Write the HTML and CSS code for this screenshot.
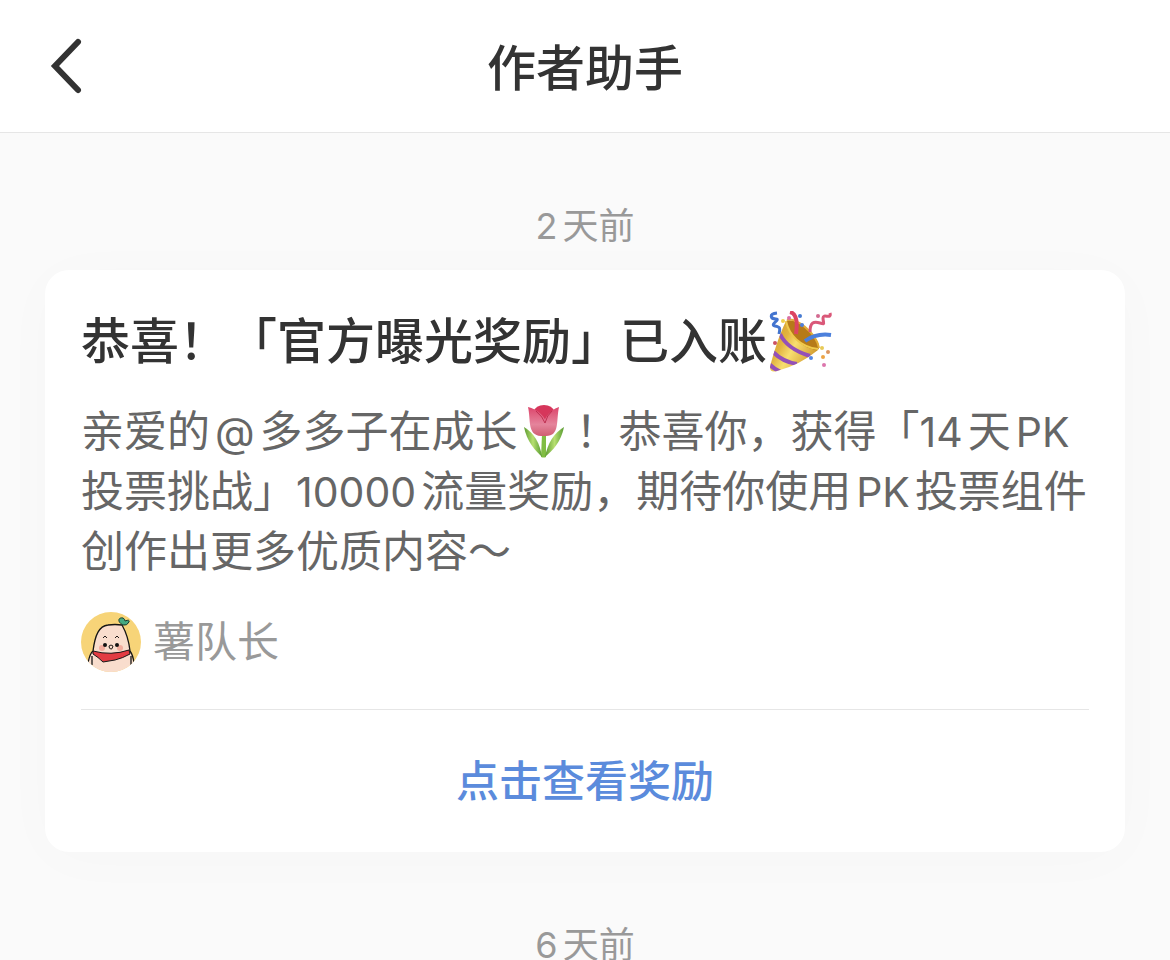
FILE: index.html
```
<!DOCTYPE html>
<html lang="zh-CN">
<head>
    <meta charset="UTF-8">
    <meta name="viewport" content="width=device-width, initial-scale=1.0">
    <title>作者助手</title>
    <link rel="stylesheet" href="styles.css">
</head>
<body>
    <header class="header">
        <button class="back-btn" type="button" aria-label="返回">
            <svg viewBox="0 0 36 60" width="36" height="60" aria-hidden="true">
                <path d="M29 6 L6 30 L29 54" fill="none" stroke="#333" stroke-width="6" stroke-linecap="round" stroke-linejoin="miter"/>
            </svg>
        </button>
        <h1>作者助手</h1>
    </header>

    <main class="messages">
        <p class="time"><span class="num">2</span>天前</p>

        <article class="card">
            <h2>恭喜！「官方曝光奖励」已入账<svg class="party" viewBox="0 0 64 64" role="img" aria-label="礼花">
                <defs>
                    <linearGradient id="cone" x1="0" y1="0.2" x2="1" y2="0.8">
                        <stop offset="0" stop-color="#d59b28"/>
                        <stop offset=".3" stop-color="#e2b440"/>
                        <stop offset=".5" stop-color="#f8de70"/>
                        <stop offset="1" stop-color="#c98c20"/>
                    </linearGradient>
                    <clipPath id="coneClip"><path d="M17 10C9 27 4 44 1 56Q1 62 8 60Q31 54 49 39Q43 19 17 10Z"/></clipPath>
                </defs>
                <path d="M17 10C9 27 4 44 1 56Q1 62 8 60Q31 54 49 39Q43 19 17 10Z" fill="url(#cone)"/>
                <g clip-path="url(#coneClip)" fill="none" stroke="#9450b8" stroke-width="4">
                    <path d="M11 23Q18 38 41 45"/>
                    <path d="M4 41Q14 51 28 53"/>
                    <path d="M0 53Q5 58 12 61"/>
                </g>
                <path d="M17 10C25 6 46 21 50 34Q51 42 43 38C30 35 20 22 17 10Z" fill="#b67a19"/>
                <path d="M17 10C20 24 31 36 49 38" fill="none" stroke="#efc94b" stroke-width="2"/>
                <path d="M18 9C26 6 47 21 50 37" fill="none" stroke="#e2ad37" stroke-width="2"/>
                <path d="M21 1Q30 3 27 23" fill="none" stroke="#dc4561" stroke-width="4"/>
                <path d="M36 30Q47 22 62 24" fill="none" stroke="#4c80dc" stroke-width="4"/>
                <path d="M8 2C-1 3 2 8 7 8S0 14 6 15S11 18 10 23" fill="none" stroke="#4374cf" stroke-width="3"/>
                <path d="M61 2C63 9 54 2 54 7S57 14 51 12S41 11 41 21" fill="none" stroke="#da5879" stroke-width="3"/>
                <circle cx="14" cy="10" r="2" fill="#efcf4b"/>
                <circle cx="20" cy="7" r="2" fill="#da70a5"/>
                <circle cx="31" cy="5" r="2" fill="#467bd1"/>
                <circle cx="33" cy="14" r="2" fill="#507fdb"/>
                <circle cx="49" cy="5" r="2" fill="#d36a90"/>
                <circle cx="6" cy="32" r="2" fill="#cb5262"/>
                <circle cx="42" cy="47" r="2" fill="#5286e6"/>
                <circle cx="53" cy="37" r="2" fill="#e8ca58"/>
                <circle cx="59" cy="41" r="2" fill="#db9560"/>
                <circle cx="54" cy="46" r="2" fill="#eca446"/>
                <circle cx="55" cy="54" r="2" fill="#dc76ad"/>
            </svg></h2>

            <p class="content">亲爱的<span class="latin">@</span>多多子在成长<svg class="tulip" viewBox="0 0 50 56" role="img" aria-label="郁金香">
                <defs>
                    <linearGradient id="petal" x1="0" y1="0" x2="0" y2="1">
                        <stop offset="0" stop-color="#dc456b"/>
                        <stop offset=".6" stop-color="#e5849c"/>
                        <stop offset="1" stop-color="#cf5e72"/>
                    </linearGradient>
                    <linearGradient id="leaf">
                        <stop offset="0" stop-color="#5c9b32"/>
                        <stop offset=".5" stop-color="#b7df70"/>
                        <stop offset="1" stop-color="#579a31"/>
                    </linearGradient>
                </defs>
                <path d="M22 31H26V54Q24 55 21 54Z" fill="#81bd43"/>
                <path d="M22 54C15 47 7 39 4 24Q19 33 22 54Z" fill="url(#leaf)"/>
                <path d="M25 54C33 47 41 39 44 24Q29 33 25 54Z" fill="url(#leaf)"/>
                <path d="M13 9Q16 2 24 2Q32 2 35 9V26H13Z" fill="#d6365b"/>
                <path d="M8 4C17 6 26 13 28 25Q28 34 21 33C7 32 11 17 8 4Z" fill="url(#petal)"/>
                <path d="M39 4C29 7 21 18 21 33H26C40 33 36 18 39 4Z" fill="url(#petal)"/>
                <path d="M16 8Q23 14 25 20Q27 12 32 8" fill="none" stroke="#be2f50"/>
            </svg>！恭喜你，获得「<span class="num">14</span>天<span class="latin-start">PK</span>投票挑战」<span class="num">10000</span>流量奖励，期待你使用<span class="latin">PK</span>投票组件创作出更多优质内容～</p>

            <div class="author">
                <svg class="avatar" viewBox="0 0 60 60" role="img" aria-label="薯队长头像">
                    <defs><clipPath id="avatarClip"><circle cx="30" cy="30" r="30"/></clipPath></defs>
                    <g clip-path="url(#avatarClip)">
                        <rect width="60" height="60" fill="#f7d478"/>
                        <path d="M7 60V48Q9 41 13 39C14 23 18 14 27 13Q34 12 41 13C45 20 48 30 49 39Q52 43 53 60Z" fill="#f9ddcd"/>
                        <path d="M7 51Q9 41 12 39C14 23 18 14 27 13Q34 12 41 13C45 20 48 30 49 39Q52 43 53 51M11 44V53M50 44V53" fill="none" stroke="#151515" stroke-width="1.3"/>
                        <circle cx="21" cy="36" r="3" fill="#f2ad9e"/>
                        <circle cx="39" cy="36" r="3" fill="#f2ad9e"/>
                        <circle cx="24" cy="33" r="2" fill="#111"/>
                        <circle cx="36" cy="33" r="2" fill="#111"/>
                        <path d="M22 26L24 24L26 26M34 26L36 24L38 26M28 34Q30 32 32 34Q31 38 30 37Q28 37 28 34Z" fill="none" stroke="#211b19" stroke-width="1"/>
                        <path d="M12 39Q30 44 48 38L49 42Q42 46 34 48L22 50Q17 45 12 42Z" fill="#e23b42" stroke="#171717" stroke-width="1"/>
                    </g>
                    <path d="M42 13C36 10 37 5 42 6Q44 7 44 9Q49 7 48 10Q46 14 42 13Z" fill="#45aa81" stroke="#173c30" stroke-width="1"/>
                </svg>
                <span class="name">薯队长</span>
            </div>

            <a class="reward-link" href="#">点击查看奖励</a>
        </article>

        <p class="time"><span class="num">6</span>天前</p>
    </main>
</body>
</html>
```
FILE: styles.css
```
* {
    box-sizing: border-box;
}

body {
    display: flex;
    flex-direction: column;
    height: 100vh;
    margin: 0;
    background: #fafafa;
    color: #333;
    font-family: Inter, "Noto Sans CJK SC", sans-serif;
}

h1, h2, p {
    margin: 0;
}

.header {
    display: grid;
    grid-template-columns: 80px 1fr 80px;
    align-items: center;
    flex: none;
    height: 133px;
    padding: 0 49px;
    background: #fff;
    border-bottom: 1px solid #e6e6e6;
}

.header h1 {
    padding-top: 6px;
    text-align: center;
    font-size: 49px;
    font-weight: 500;
    line-height: 68px;
}

.back-btn {
    display: flex;
    width: 40px;
    padding: 0;
    border: none;
    background: none;
    cursor: pointer;
}

.messages {
    flex: 1;
    min-height: 0;
    padding: 68px 45px 0;
    overflow-y: auto;
    scrollbar-width: none;
}

.time {
    color: #999;
    font-size: 36px;
    line-height: 50px;
    text-align: center;
}

.card {
    margin: 19px 0 68px;
    padding: 38px 36px 0;
    background: #fff;
    border-radius: 24px;
    box-shadow: 0 6px 60px rgba(0, 0, 0, 0.02);
}

.card h2 {
    font-size: 49px;
    font-weight: 500;
    line-height: 68px;
}

.content {
    margin-top: 25px;
    color: #666;
    font-size: 43px;
    line-height: 60px;
}

/* latin letters and digits are a bit smaller and keep a gap to the characters around them */
.content .latin, .content .latin-start, .content .num {
    font-size: 41px;
    line-height: 1;
}

.latin {
    margin: 0 5px;
}

.latin-start {
    margin-left: 5px;
}

.num {
    margin-right: 5px;
}

.party {
    width: 64px;
    height: 64px;
    margin: -8px 0 -8px 2px;
    vertical-align: -8px;
}

.tulip {
    width: 50px;
    height: 56px;
    margin: -8px 6px -8px 2px;
    vertical-align: -4px;
}

.author {
    display: flex;
    align-items: center;
    gap: 12px;
    margin-top: 31px;
    padding-bottom: 37px;
    border-bottom: 1px solid #e6e6e6;
}

.avatar {
    width: 60px;
    height: 60px;
}

.name {
    color: #999;
    font-size: 42px;
    line-height: 60px;
}

.reward-link {
    display: block;
    padding: 41px 0;
    color: #5b8bdc;
    font-size: 43px;
    font-weight: 500;
    line-height: 60px;
    text-align: center;
    text-decoration: none;
}
```
